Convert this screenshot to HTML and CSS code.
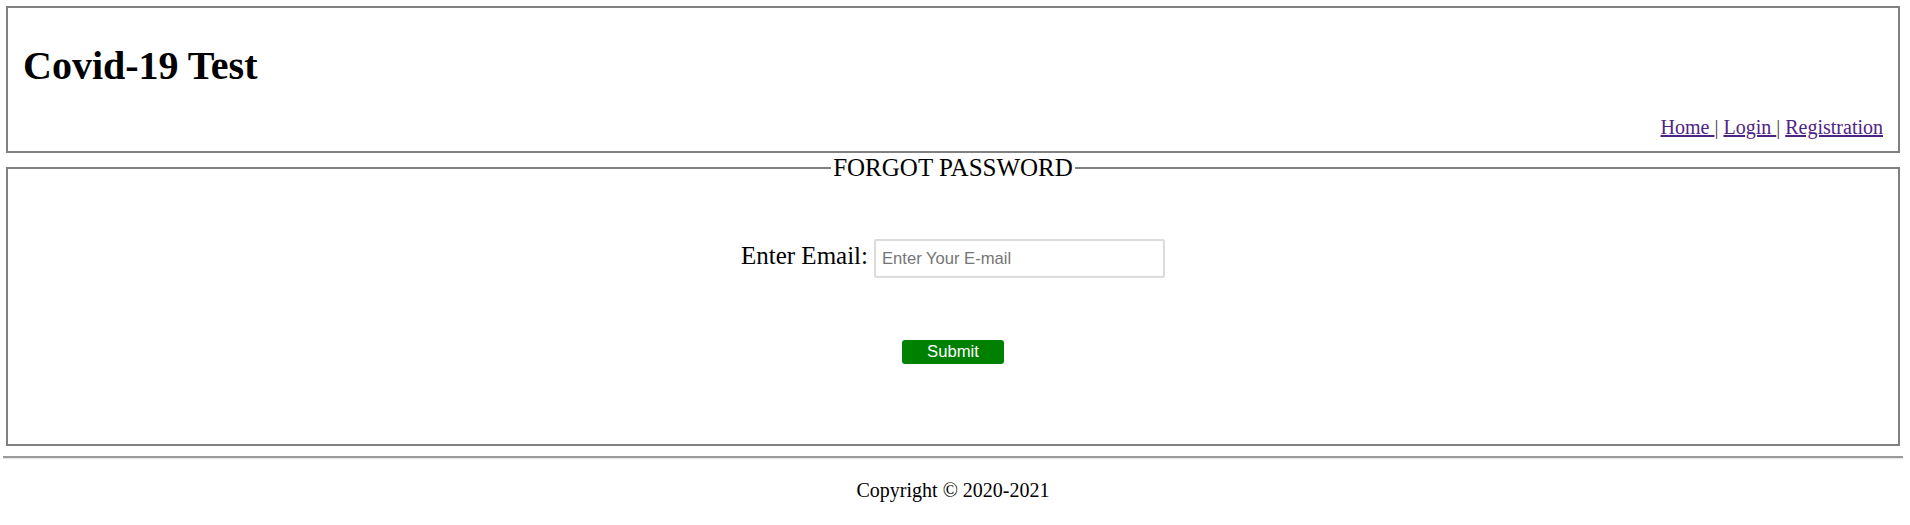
FILE: index.html
```html
<!DOCTYPE html>
<html lang="en">
<head>
<meta charset="utf-8">
<title>Covid-19 Test - Forgot Password</title>
<link rel="stylesheet" href="styles.css">
</head>
<body>
  <header class="site-header">
    <h1 class="site-title">Covid-19 Test</h1>
    <nav class="site-nav">
      <a href="#">Home </a>| <a href="#">Login </a>| <a href="#">Registration</a>
    </nav>
  </header>

  <fieldset class="panel">
    <legend class="panel-title">FORGOT PASSWORD</legend>
    <div class="panel-body">
      <div class="field-row">
        <label class="field-label" for="email">Enter Email:</label>
        <input class="field-input" id="email" type="email" placeholder="Enter Your E-mail">
      </div>
      <button class="btn-submit" type="submit">Submit</button>
    </div>
  </fieldset>

  <hr class="divider">
  <footer class="site-footer">Copyright &copy; 2020-2021</footer>
</body>
</html>
```

FILE: styles.css
```css
html, body {
  margin: 0;
  padding: 0;
  background: #ffffff;
}

body {
  font-family: "Liberation Serif", "Times New Roman", serif;
  font-size: 20px;
  color: #000;
}

.site-header {
  margin: 6px 10px 0 6px;
  border: 2px solid #808080;
  padding: 0 15px 12px 15px;
  display: flex;
  flex-direction: column;
}

.site-title {
  margin: 35px 0 0 0;
  font-size: 40px;
  line-height: 46px;
  font-weight: bold;
}

.site-nav {
  margin-top: 27px;
  text-align: right;
  line-height: 23px;
  color: #444;
}

.site-nav a {
  color: #4f2386;
  text-decoration: underline;
}

.panel {
  margin: 0 10px 0 6px;
  padding: 0 0 80px 0;
  border: 2px solid #808080;
  min-width: 0;
}

.panel-title {
  margin: 0 auto;
  padding: 0 2px;
  font-size: 25px;
  line-height: 29px;
}

.panel-body {
  display: flex;
  flex-direction: column;
  align-items: center;
}

.field-row {
  margin-top: 57px;
  text-align: center;
  line-height: 29px;
}

.field-label {
  font-size: 25px;
}

.field-input {
  box-sizing: border-box;
  width: 291px;
  height: 39px;
  margin: 0 0 0 1px;
  padding: 0 6px;
  border: 2px solid #dcdcdc;
  border-radius: 2px;
  box-shadow: inset 0 0 1px #cfcfcf;
  font-family: "Liberation Sans", Arial, sans-serif;
  font-size: 16.6px;
  color: #000;
  vertical-align: baseline;
  outline: none;
}

.field-input::placeholder {
  color: #757575;
}

.btn-submit {
  margin-top: 62px;
  width: 102px;
  height: 24px;
  padding: 0;
  border: none;
  border-radius: 3px;
  background: #008000;
  color: #ffffff;
  font-family: "Liberation Sans", Arial, sans-serif;
  font-size: 16.67px;
  line-height: 24px;
}

.divider {
  margin: 10px 7px 0 3px;
  height: 0;
  border: none;
  border-top: 2px solid #9a9a9a;
  border-bottom: 1px solid #e6e6e6;
}

.site-footer {
  margin: 20px 7px 0 3px;
  text-align: center;
  line-height: 23px;
}
```
